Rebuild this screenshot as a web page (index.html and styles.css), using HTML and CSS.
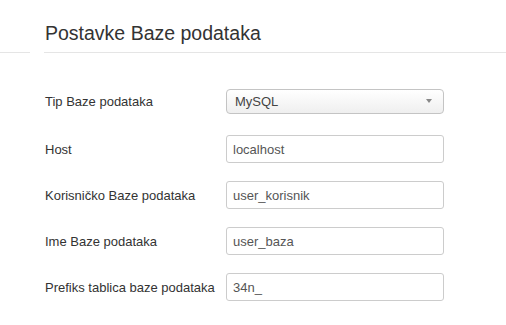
FILE: index.html
```html
<!DOCTYPE html>
<html lang="hr">
<head>
    <meta charset="UTF-8">
    <meta name="viewport" content="width=device-width, initial-scale=1.0">
    <title>Postavke Baze podataka</title>
    <link rel="stylesheet" href="styles.css">
</head>
<body>
    <div class="page">
        <aside class="side">
            <div class="side-head"></div>
        </aside>
        <main class="content">
            <h2 class="title">Postavke Baze podataka</h2>
            <form class="form">
                <div class="row row-first">
                    <label for="dbType">Tip Baze podataka</label>
                    <div class="select" id="dbType">
                        <span>MySQL</span>
                        <span class="caret"></span>
                    </div>
                </div>
                <div class="row">
                    <label for="dbHost">Host</label>
                    <input type="text" id="dbHost" value="localhost">
                </div>
                <div class="row">
                    <label for="dbUser">Korisničko Baze podataka</label>
                    <input type="text" id="dbUser" value="user_korisnik">
                </div>
                <div class="row">
                    <label for="dbName">Ime Baze podataka</label>
                    <input type="text" id="dbName" value="user_baza">
                </div>
                <div class="row">
                    <label for="dbPrefix">Prefiks tablica baze podataka</label>
                    <input type="text" id="dbPrefix" value="34n_">
                </div>
            </form>
        </main>
    </div>
</body>
</html>
```

FILE: styles.css
```css
body {
    font-family: 'Liberation Sans', Arial, sans-serif;
    background-color: #fff;
    color: #333;
    margin: 0;
    padding: 0;
}
.page {
    display: flex;
    width: 506px;
}
.side {
    width: 30px;
    flex-shrink: 0;
}
.side-head {
    height: 52px;
    border-bottom: 1px solid #e5e5e5;
}
.content {
    flex: 1;
    margin-left: 14px;
}
.title {
    font-size: 19.5px;
    font-weight: normal;
    line-height: 22px;
    margin: 0;
    padding: 22px 0 8px 1px;
    border-bottom: 1px solid #e5e5e5;
}
.form {
    margin-top: 34px;
    padding-left: 1px;
}
.row {
    display: flex;
    align-items: center;
    height: 28px;
    margin-bottom: 18px;
    font-size: 13px;
}
.row-first {
    margin-bottom: 20px;
}
.row label {
    width: 181px;
    flex-shrink: 0;
}
.row input {
    box-sizing: border-box;
    width: 218px;
    height: 28px;
    padding: 0 6px;
    border: 1px solid #ccc;
    border-radius: 3px;
    font-family: inherit;
    font-size: 13px;
    color: #555;
    outline: none;
}
.select {
    box-sizing: border-box;
    width: 218px;
    height: 25px;
    padding: 0 8px;
    border: 1px solid #c4c4c4;
    border-radius: 4px;
    background: linear-gradient(#fff, #efefef);
    display: flex;
    align-items: center;
    justify-content: space-between;
    color: #444;
}
.caret {
    width: 0;
    height: 0;
    border-left: 3.5px solid transparent;
    border-right: 3.5px solid transparent;
    border-top: 4px solid #888;
    margin-right: 3px;
}
```
